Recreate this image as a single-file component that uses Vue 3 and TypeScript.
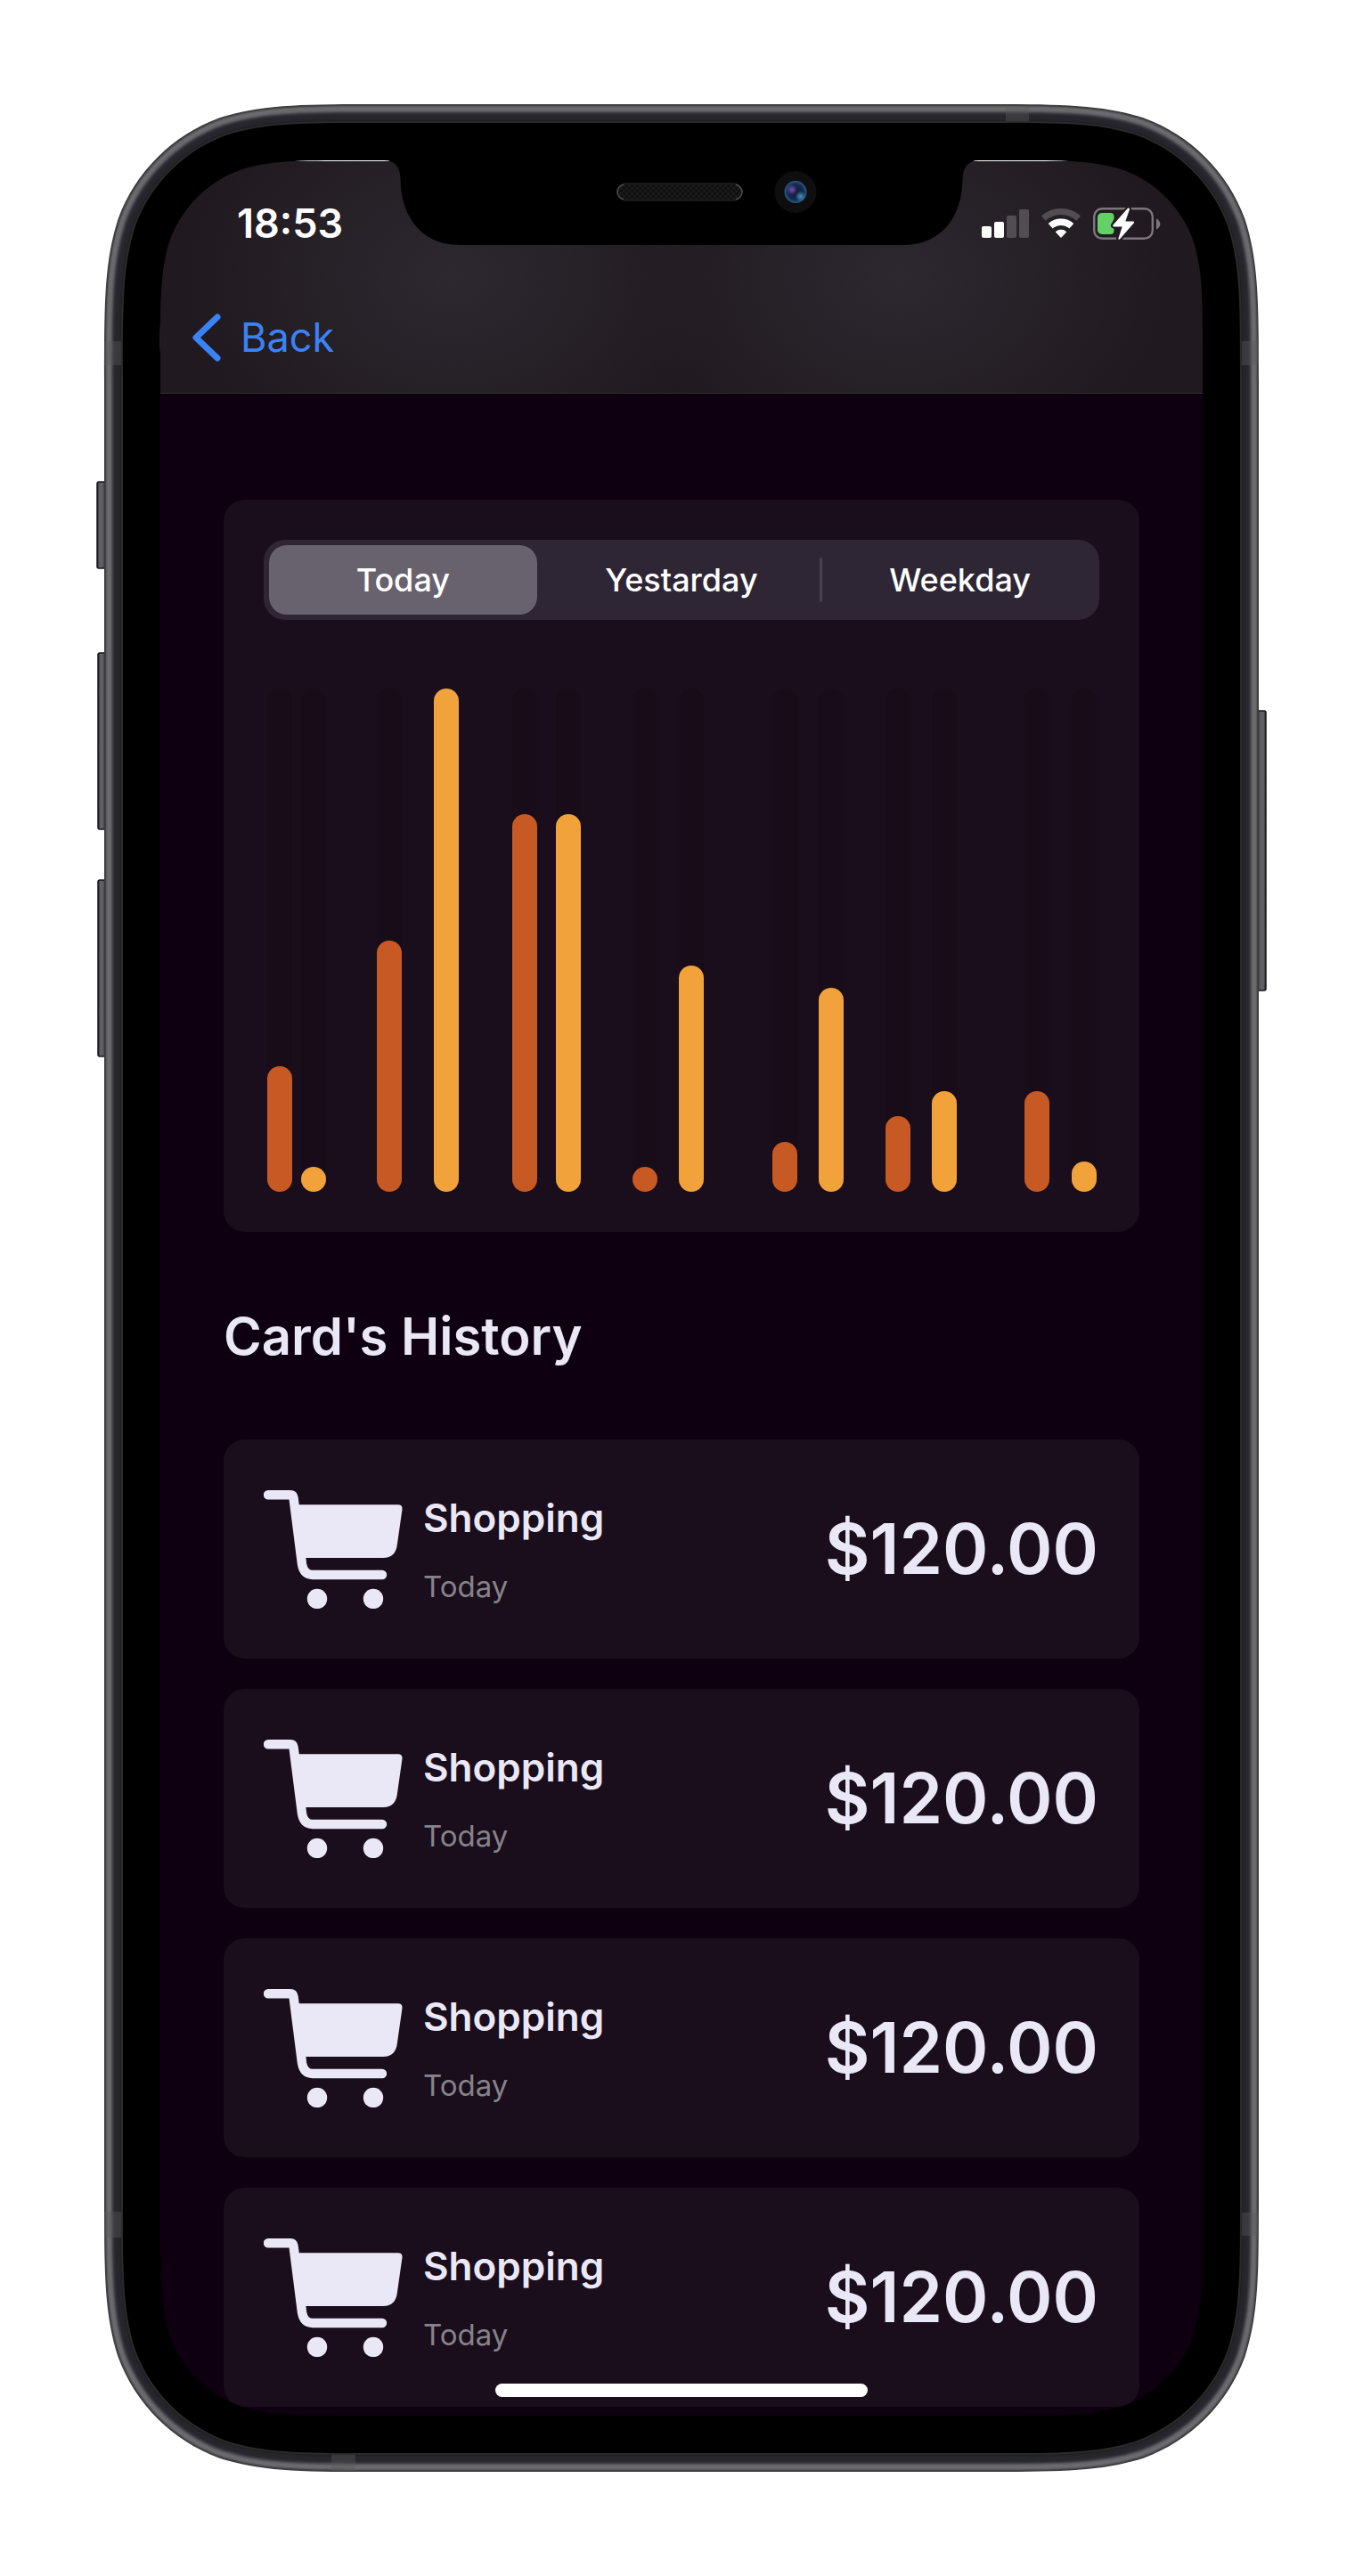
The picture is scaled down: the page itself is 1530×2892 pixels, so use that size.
<script setup lang="ts">
import { ref } from 'vue'

interface Bar {
  tone: 'rust' | 'amber'
  value: number
}

interface Transaction {
  id: number
  title: string
  when: string
  amount: string
}

const periods: string[] = ['Today', 'Yestarday', 'Weekday']
const selected = ref<number>(0)

const values: number[] = [25, 5, 50, 100, 75, 75, 5, 45, 10, 40.5, 15, 20, 20, 6]
const bars: Bar[] = values.map((value, i) => ({ tone: i % 2 === 0 ? 'rust' : 'amber', value }))

// Space after each bar, as a share of the free width
const spacing: number[] = [10, 57, 36, 60, 21, 58, 24, 77, 24, 47, 24, 76, 25]
const chartColumns: string = spacing.map((s) => `28px ${s}fr`).join(' ') + ' 28px'

const transactions: Transaction[] = [1, 2, 3, 4].map((id) => ({
  id,
  title: 'Shopping',
  when: 'Today',
  amount: '$120.00',
}))

// Continuous-curvature rounded rectangle, drawn clockwise
function squircle(x: number, y: number, w: number, h: number, r: number): string {
  const corner = (cx: number, cy: number, ux: number, uy: number, vx: number, vy: number): string => {
    // u runs back along the incoming edge, v runs along the outgoing edge
    const p = (a: number, b: number): string =>
      `${(cx + (ux * a + vx * b) * r).toFixed(2)} ${(cy + (uy * a + vy * b) * r).toFixed(2)}`
    return (
      `L${p(1.528665, 0)} C${p(1.088493, 0)} ${p(0.868407, 0)} ${p(0.631494, 0.074911)} ` +
      `C${p(0.372824, 0.169059)} ${p(0.16906, 0.372824)} ${p(0.074911, 0.631494)} ` +
      `C${p(0, 0.868407)} ${p(0, 1.088493)} ${p(0, 1.528665)} `
    )
  }
  return (
    `M${x + w / 2} ${y} ` +
    corner(x + w, y, -1, 0, 0, 1) +
    corner(x + w, y + h, 0, -1, -1, 0) +
    corner(x, y + h, 1, 0, 0, -1) +
    corner(x, y, 0, 1, 1, 0) +
    'Z'
  )
}

function inset(i: number): string {
  return squircle(i, i, 1296 - 2 * i, 2658 - 2 * i, 205 - i)
}

// Metal rim, one ring per pixel from the outside in
const metal: string[] = [
  '#39393b', '#434346', '#5a5a5e', '#66656a', '#6c6b70', '#6c6b70', '#68676c', '#626166',
  '#515156', '#404046', '#33333a', '#2b2b31', '#27272d', '#27272d', '#26262c', '#26262c',
  '#25252b', '#242429', '#1f1f23', '#2c2c2b', '#2a2a29',
]
const rings = metal.map((fill, i) => ({ fill, d: inset(i) + ' ' + inset(30) }))
const bezel: string = inset(21) + ' ' + inset(63)
</script>

<template>
  <div class="page">
    <div class="phone">
      <div class="screen">
        <header class="topbar">
          <div class="status">
            <time class="clock">18:53</time>
            <div class="indicators">
              <svg class="signal" viewBox="0 0 53 34" aria-hidden="true">
                <rect x="0" y="20" width="11" height="13" rx="2" fill="#fff" />
                <rect x="14" y="15" width="11" height="18" rx="2" fill="#fff" />
                <rect x="28" y="8" width="11" height="25" rx="2" fill="#524d53" />
                <rect x="42" y="1" width="11" height="32" rx="2" fill="#524d53" />
              </svg>
              <svg class="wifi" viewBox="0 0 46 36" fill="none" aria-hidden="true">
                <path d="M3.3 12.1A29.5 29.5 0 0 1 42.7 12.1" stroke="#524d53" stroke-width="7" />
                <path d="M11.2 20.8A17.7 17.7 0 0 1 34.8 20.8" stroke="#fff" stroke-width="7.4" />
                <path d="M23 33.5L17.2 27.4A8.6 8.6 0 0 1 28.8 27.4Z" fill="#fff" stroke="#fff" stroke-linejoin="round" />
              </svg>
              <svg class="battery" viewBox="0 0 76 38" aria-hidden="true">
                <rect x="1.2" y="2.2" width="65.6" height="33.6" rx="9" fill="none" stroke="#7b777d" stroke-width="2.4" />
                <path d="M71 13.5c2.6 1.2 4.3 3.3 4.3 6s-1.7 4.8-4.3 6z" fill="#7b777d" />
                <path d="M10 7h9.5a4 4 0 0 1 4 4v3l-3 5.5 3 2.5v5a4 4 0 0 1-4 4H10a5 5 0 0 1-5-5V12a5 5 0 0 1 5-5z" fill="#65cf68" />
                <path d="M39 1.8L22.5 20.5q-1 1.7 1 1.9h9.2L28.3 36q.3 1.4 1.7.4L45.7 18.4q1-1.7-1-1.9h-8.4L41 3q-.2-2.3-2-1.2z" fill="#fff" stroke="#231d24" stroke-width="4.5" paint-order="stroke" stroke-linejoin="round" />
              </svg>
            </div>
          </div>
          <a class="back" href="#">
            <svg class="chevron" viewBox="0 0 32 54" fill="none" aria-hidden="true">
              <path d="M28 4L4 27l24 23" stroke="#3b82f7" stroke-width="7" stroke-linecap="round" stroke-linejoin="round" />
            </svg>
            <span>Back</span>
          </a>
        </header>

        <main class="content">
          <section class="panel">
            <div class="segmented" role="group" aria-label="Period">
              <button
                v-for="(period, i) in periods"
                :key="period"
                type="button"
                class="segment"
                :class="{ active: selected === i, divided: i > 0 && selected !== i && selected !== i - 1 }"
                :aria-pressed="selected === i"
                @click="selected = i"
              >
                {{ period }}
              </button>
            </div>
            <div class="chart" :style="{ gridTemplateColumns: chartColumns }">
              <div
                v-for="(bar, i) in bars"
                :key="i"
                class="track"
                :style="{ gridColumn: i * 2 + 1 }"
              >
                <div class="bar" :class="bar.tone" :style="{ height: bar.value + '%' }"></div>
              </div>
            </div>
          </section>

          <h1 class="heading">Card's History</h1>

          <ul class="history">
            <li v-for="item in transactions" :key="item.id" class="entry">
              <svg class="cart" viewBox="0 0 156 133" aria-hidden="true">
                <path d="M5 5.2H30Q33 5.2 33.5 8.5L43 83Q45 95 55 95H133" fill="none" stroke="#eae8f6" stroke-width="10.4" stroke-linecap="round" stroke-linejoin="round" />
                <path d="M36 16.3H150.5Q156 16.3 155.5 21.5L150 60Q148.5 76 134 76H42Z" fill="#eae8f6" />
                <circle cx="60" cy="122" r="11.2" fill="#eae8f6" />
                <circle cx="123" cy="122" r="11.2" fill="#eae8f6" />
              </svg>
              <div class="details">
                <span class="title">{{ item.title }}</span>
                <span class="when">{{ item.when }}</span>
              </div>
              <span class="amount">{{ item.amount }}</span>
            </li>
          </ul>
        </main>
        <div class="home"></div>
      </div>

      <svg class="frame" viewBox="0 0 1296 2658" preserveAspectRatio="none" aria-hidden="true">
        <defs>
          <linearGradient id="key-left" x1="0" x2="1" y1="0" y2="0">
            <stop offset="0" stop-color="#1c1c22" />
            <stop offset="0.25" stop-color="#5c5c62" />
            <stop offset="0.5" stop-color="#626267" />
            <stop offset="1" stop-color="#38383d" />
          </linearGradient>
          <linearGradient id="key-right" x1="1" x2="0" y1="0" y2="0">
            <stop offset="0" stop-color="#1c1c22" />
            <stop offset="0.25" stop-color="#5c5c62" />
            <stop offset="0.5" stop-color="#626267" />
            <stop offset="1" stop-color="#38383d" />
          </linearGradient>
          <pattern id="mesh" width="6" height="6" patternUnits="userSpaceOnUse">
            <rect width="6" height="6" fill="#0f0f0f" />
            <path d="M0 0h3v3H0zM3 3h3v3H3z" fill="#1b1b1b" />
          </pattern>
          <radialGradient id="lens">
            <stop offset="0" stop-color="#101a3a" />
            <stop offset="0.7" stop-color="#15294f" />
            <stop offset="1" stop-color="#2b5c8c" />
          </radialGradient>
          <radialGradient id="violet">
            <stop offset="0" stop-color="#7a4fb0" />
            <stop offset="1" stop-color="#7a4fb0" stop-opacity="0" />
          </radialGradient>
          <radialGradient id="teal">
            <stop offset="0" stop-color="#4594b8" />
            <stop offset="1" stop-color="#4594b8" stop-opacity="0" />
          </radialGradient>
        </defs>
        <g stroke="#17171c" stroke-width="1.5">
          <rect x="-8" y="424" width="10" height="97" rx="2" fill="url(#key-left)" />
          <rect x="-7" y="616" width="9" height="198" rx="2" fill="url(#key-left)" />
          <rect x="-7" y="871" width="9" height="198" rx="2" fill="url(#key-left)" />
          <rect x="1294" y="681" width="10" height="314" rx="2" fill="url(#key-right)" />
        </g>
        <path v-for="ring in rings" :key="ring.d" :d="ring.d" :fill="ring.fill" fill-rule="evenodd" />
        <path :d="bezel" fill="#000" fill-rule="evenodd" />
        <g fill="#5a5a5a" fill-opacity="0.4">
          <rect x="0" y="266" width="19" height="27" />
          <rect x="1277" y="266" width="19" height="27" />
          <rect x="0" y="2366" width="19" height="29" />
          <rect x="1277" y="2367" width="19" height="26" />
          <rect x="1012" y="2" width="26" height="17" />
          <rect x="255" y="2639" width="27" height="18" />
        </g>
        <path d="M314 62V63Q332 63 332.5 84C333 125 355 158 399 158H897C941 158 963 125 963.5 84Q964 63 982 63V62Z" fill="#000" />
        <rect x="576" y="89" width="140" height="19" rx="9.5" fill="url(#mesh)" stroke="#1e1e1e" stroke-width="1.5" />
        <path d="M583 90Q576 93 576 98.5T583 107M709 90Q716 93 716 98.5T709 107" fill="none" stroke="#4a4a4a" stroke-width="1.5" />
        <circle cx="776" cy="98.5" r="23.5" fill="#0e0e0e" />
        <circle cx="776" cy="98.5" r="12.5" fill="url(#lens)" />
        <circle cx="772" cy="96" r="6" fill="url(#violet)" />
        <circle cx="781.5" cy="103.5" r="6" fill="url(#teal)" />
      </svg>
    </div>
  </div>
</template>

<style>
body {
  margin: 0;
  background: #fff;
}
</style>

<style scoped>
.page {
  padding: 117px;
  font-family: Inter, 'Liberation Sans', sans-serif;
}

.phone {
  position: relative;
  padding: 63px;
}

.frame {
  position: absolute;
  inset: 0;
  width: 100%;
  height: 100%;
  overflow: visible;
  pointer-events: none;
}

.screen {
  position: relative;
  border-top: 1px solid #fff;
  background: #0e0010;
}

.topbar {
  padding: 44px 47px 36px 36px;
  border-bottom: 1px solid #322e33;
  background:
    radial-gradient(ellipse 300px 230px at 28% 50%, #2d282f, rgba(45, 40, 47, 0)),
    radial-gradient(ellipse 300px 230px at 71% 50%, #2d282f, rgba(45, 40, 47, 0)),
    #201a20;
}

.status {
  display: flex;
  align-items: center;
  justify-content: space-between;
  height: 52px;
  padding-left: 50px;
}

.clock {
  color: #fff;
  font-size: 45px;
  font-weight: 600;
  line-height: 52px;
}

.indicators {
  display: flex;
  align-items: center;
  gap: 13px;
}

.signal {
  width: 53px;
  height: 34px;
}

.wifi {
  width: 46px;
  height: 36px;
}

.battery {
  width: 76px;
  height: 38px;
}

.back {
  display: inline-flex;
  align-items: center;
  gap: 22px;
  height: 52px;
  margin-top: 76px;
  color: #3b82f7;
  font-size: 45px;
  line-height: 52px;
  text-decoration: none;
  vertical-align: top;
}

.chevron {
  width: 32px;
  height: 54px;
}

.content {
  padding: 119px 71px 10px;
}

.panel {
  padding: 45px;
  border-radius: 24px;
  background: #1a0e1c;
}

.segmented {
  display: grid;
  grid-template-columns: repeat(3, 1fr);
  height: 90px;
  border-radius: 24px;
  background: #2e2634;
}

.segment {
  position: relative;
  margin: 6px;
  padding: 0;
  border: 0;
  border-radius: 20px;
  background: transparent;
  color: #fff;
  font-family: inherit;
  font-size: 36px;
  font-weight: 500;
  line-height: 48px;
}

.segment.active {
  background: #68626e;
}

.segment.divided::before {
  content: '';
  position: absolute;
  top: 14px;
  bottom: 14px;
  left: -7px;
  width: 3px;
  border-radius: 2px;
  background: #48424f;
}

.chart {
  display: grid;
  height: 565px;
  margin-top: 77px;
  padding: 0 3px 0 4px;
}

.track {
  display: flex;
  align-items: flex-end;
  border-radius: 14px;
  background: #180c18;
}

.bar {
  width: 100%;
  border-radius: 14px;
}

.rust {
  background: #c75924;
}

.amber {
  background: #f1a23b;
}

.heading {
  margin: 81px 0 0;
  color: #eae8f6;
  font-size: 58px;
  font-weight: 600;
  line-height: 72px;
}

.history {
  display: flex;
  flex-direction: column;
  gap: 34px;
  margin: 80px 0 0;
  padding: 0;
  list-style: none;
}

.entry {
  display: flex;
  align-items: center;
  box-sizing: border-box;
  height: 246px;
  padding: 0 46px 0 45px;
  border-radius: 24px;
  background: #1a0e1c;
}

.cart {
  width: 156px;
  height: 133px;
  margin-right: 23px;
}

.details {
  display: flex;
  flex: 1;
  flex-direction: column;
  gap: 29px;
  padding-bottom: 2px;
}

.title {
  color: #eae8f6;
  font-size: 44px;
  font-weight: 600;
  line-height: 56px;
}

.when {
  color: #86838a;
  font-size: 33px;
  line-height: 40px;
}

.amount {
  color: #eae8f6;
  font-size: 78px;
  font-weight: 600;
  line-height: 96px;
}

.home {
  position: absolute;
  bottom: 21px;
  left: 50%;
  width: 418px;
  height: 15px;
  margin-left: -209px;
  border-radius: 8px;
  background: #fff;
}
</style>
